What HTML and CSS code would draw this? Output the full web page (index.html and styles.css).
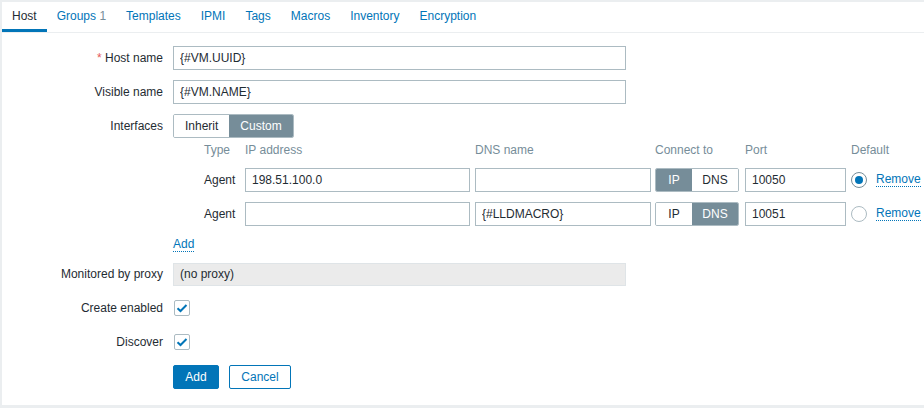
FILE: index.html
```html
<!DOCTYPE html>
<html>
<head>
<meta charset="utf-8">
<link rel="stylesheet" href="styles.css">
</head>
<body>
<div class="panel">
  <ul class="tabs">
    <li class="tab active">Host</li>
    <li class="tab">Groups <span class="count">1</span></li>
    <li class="tab">Templates</li>
    <li class="tab">IPMI</li>
    <li class="tab">Tags</li>
    <li class="tab">Macros</li>
    <li class="tab">Inventory</li>
    <li class="tab">Encryption</li>
  </ul>
  <div class="form">
    <div class="row">
      <label class="label"><span class="req">*</span> Host name</label>
      <div class="field"><input class="text wide" type="text" value="{#VM.UUID}"></div>
    </div>
    <div class="row">
      <label class="label">Visible name</label>
      <div class="field"><input class="text wide" type="text" value="{#VM.NAME}"></div>
    </div>
    <div class="row">
      <label class="label">Interfaces</label>
      <div class="field col">
        <div class="toggle">
          <span class="opt">Inherit</span><span class="opt on">Custom</span>
        </div>
        <div class="iface">
          <div class="hd first">Type</div>
          <div class="hd">IP address</div>
          <div class="hd">DNS name</div>
          <div class="hd">Connect to</div>
          <div class="hd">Port</div>
          <div class="hd">Default</div>

          <div class="cell first">Agent</div>
          <div class="cell"><input class="text ip" type="text" value="198.51.100.0"></div>
          <div class="cell"><input class="text dns" type="text" value=""></div>
          <div class="cell"><div class="toggle small"><span class="opt on">IP</span><span class="opt">DNS</span></div></div>
          <div class="cell"><input class="text port" type="text" value="10050"></div>
          <div class="cell"><span class="radio checked"></span><a class="link">Remove</a></div>

          <div class="cell first">Agent</div>
          <div class="cell"><input class="text ip" type="text" value=""></div>
          <div class="cell"><input class="text dns" type="text" value="{#LLDMACRO}"></div>
          <div class="cell"><div class="toggle small"><span class="opt">IP</span><span class="opt on">DNS</span></div></div>
          <div class="cell"><input class="text port" type="text" value="10051"></div>
          <div class="cell"><span class="radio"></span><a class="link">Remove</a></div>
        </div>
        <a class="link add-link">Add</a>
      </div>
    </div>
    <div class="row">
      <label class="label">Monitored by proxy</label>
      <div class="field"><div class="readonly">(no proxy)</div></div>
    </div>
    <div class="row">
      <label class="label">Create enabled</label>
      <div class="field"><span class="check"><svg viewBox="0 0 16 16" width="16" height="16"><path d="M3.5 8.2 L6.5 11 L12.5 5" fill="none" stroke="#0275b8" stroke-width="2"/></svg></span></div>
    </div>
    <div class="row">
      <label class="label">Discover</label>
      <div class="field"><span class="check"><svg viewBox="0 0 16 16" width="16" height="16"><path d="M3.5 8.2 L6.5 11 L12.5 5" fill="none" stroke="#0275b8" stroke-width="2"/></svg></span></div>
    </div>
    <div class="row buttons">
      <div class="label"></div>
      <div class="field">
        <button class="btn primary">Add</button>
        <button class="btn alt">Cancel</button>
      </div>
    </div>
  </div>
</div>
</body>
</html>
```
FILE: styles.css
```css
* { box-sizing: border-box; }
html, body { margin: 0; padding: 0; }
body {
  background: #ebeef0;
  font-family: "Liberation Sans", Arial, sans-serif;
  font-size: 12px;
  color: #1f2c33;
  width: 924px;
  height: 408px;
  overflow: hidden;
}
.panel {
  margin: 2px 0 0 2px;
  height: 403px;
  background: #ffffff;
}
.tabs {
  list-style: none;
  margin: 0;
  padding: 0;
  display: flex;
  height: 31px;
  border-bottom: 1px solid #ebeef0;
}
.tab {
  padding: 0 10px;
  height: 30px;
  line-height: 29px;
  color: #0275b8;
  border-bottom: 3px solid transparent;
}
.tab.active {
  color: #1f2c33;
  border-bottom-color: #0275b8;
}
.count { color: #768d99; }
.form {
  padding-top: 13px;
  display: flex;
  flex-direction: column;
  gap: 10px;
}
.row {
  display: flex;
  align-items: flex-start;
}
.label {
  width: 161px;
  flex: none;
  text-align: right;
  line-height: 24px;
  margin-right: 10px;
}
.req { color: #e45959; }
.field { display: flex; align-items: center; min-height: 24px; }
.field.col { flex-direction: column; align-items: flex-start; }
input.text {
  height: 24px;
  border: 1px solid #acbbc2;
  border-radius: 0;
  padding: 0 6px;
  font-family: inherit;
  font-size: 12px;
  color: #1f2c33;
  background: #fff;
  margin: 0;
  outline: none;
}
.wide { width: 453px; }
.ip { width: 225px; }
.dns { width: 176px; }
.port { width: 101px; }
.toggle {
  display: flex;
  height: 24px;
  border: 1px solid #acbbc2;
  border-radius: 2px;
  overflow: hidden;
}
.opt {
  padding: 0 11px;
  line-height: 22px;
  background: #fff;
  color: #1f2c33;
}
.opt.on {
  background: #768d99;
  color: #fff;
}
.toggle.small { width: 84px; }
.toggle.small .opt { flex: 1; padding: 0; text-align: center; }
.toggle.small .opt:first-child { flex: 0 0 36px; }
.iface {
  display: grid;
  grid-template-columns: 72px 230px 180px 90px 106px auto;
  row-gap: 10px;
  margin-top: 4px;
}
.hd {
  color: #768d99;
  line-height: 16px;
}
.hd.first, .cell.first { padding-left: 31px; }
.cell {
  display: flex;
  align-items: center;
  height: 24px;
}
.radio {
  width: 16px;
  height: 16px;
  border: 1px solid #acbbc2;
  border-radius: 50%;
  margin-right: 9px;
  position: relative;
  flex: none;
}
.radio.checked { border-color: #768d99; }
.radio.checked::after {
  content: "";
  position: absolute;
  left: 3px; top: 3px;
  width: 8px; height: 8px;
  border-radius: 50%;
  background: #0275b8;
}
.link {
  color: #0275b8;
  border-bottom: 1px dotted #0275b8;
  line-height: 13px;
  cursor: pointer;
}
.add-link { margin-top: 12px; }
.readonly {
  width: 453px;
  height: 23px;
  line-height: 21px;
  background: #ebebeb;
  border: 1px solid #dfe4e7;
  padding: 0 6px;
}
.check {
  width: 16px;
  height: 16px;
  border: 1px solid #acbbc2;
  border-radius: 2px;
  margin-left: 1px;
  display: flex;
  align-items: center;
  justify-content: center;
}
.check svg { display: block; flex: none; }
.buttons { margin-top: 1px; }
.btn {
  height: 24px;
  font-family: inherit;
  font-size: 12px;
  border-radius: 2px;
  padding: 0 11px;
  margin: 0 10px 0 0;
}
.btn.primary {
  background: #0275b8;
  border: 1px solid #0275b8;
  color: #fff;
  width: 46px;
}
.btn.alt {
  background: #fff;
  border: 1px solid #0275b8;
  color: #0275b8;
  width: 62px;
}
```
